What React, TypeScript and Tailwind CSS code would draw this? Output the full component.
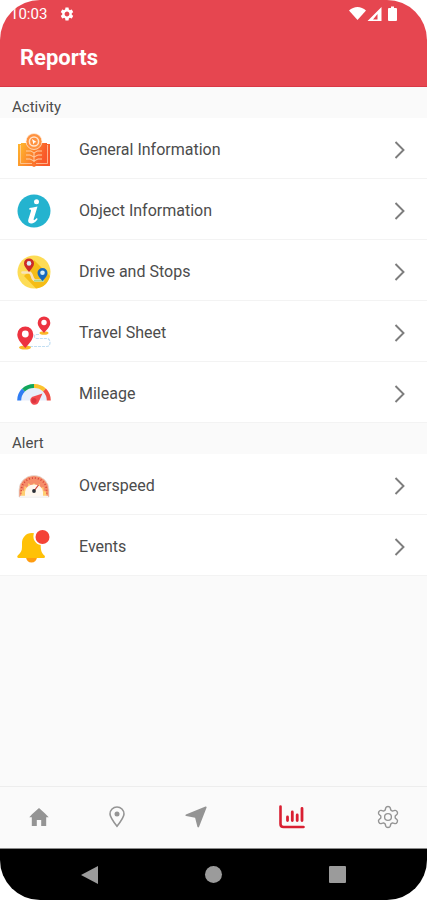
import type { ReactNode } from "react";
import { MdSettings } from "react-icons/md";

function BookIcon() {
  return (
    <svg viewBox="0 0 34 34" className="size-[34px]" aria-hidden="true">
      <defs>
        <linearGradient id="book" x1="0" x2="1" y1="0" y2="0.3">
          <stop offset="0" stopColor="#ffb52e" />
          <stop offset="1" stopColor="#f9582a" />
        </linearGradient>
      </defs>
      <path d="M1 11h3v19h12l1 2 1-2h12V11h3v22H19l-2 1-2-1H1z" fill="url(#book)" />
      <path d="M4 10h9l4 3 4-3h9v20h-9l-4 2-4-2H4z" fill="url(#book)" />
      <path d="M3.500 12v18.500H15M30.500 12v18.500H19" fill="none" stroke="#ffd9b8" strokeWidth=".7" />
      <path d="M9 18h5l3 2 3-2h5M9 22h4l4 2 4-2h4M9 26h4l4 2 4-2h4M17 20v9" fill="none" stroke="#ffcfa6" strokeWidth="1" />
      <circle cx="17" cy="8.500" r="8" fill="#ff923f" stroke="#fff0e2" strokeWidth=".7" />
      <circle cx="17" cy="8.500" r="4.600" fill="none" stroke="#ffe3cc" strokeWidth="1.500" />
      <path d="m15 6 4.500 3-2 .5-1 2z" fill="#fff" />
    </svg>
  );
}

function InfoIcon() {
  return (
    <svg viewBox="0 0 34 34" className="size-[34px]" aria-hidden="true">
      <circle cx="17" cy="17" r="16.500" fill="#24b3cf" />
      <circle cx="19.500" cy="7.800" r="2.500" fill="#fff" />
      <path d="M12.500 14c2-.3 4.500-.8 8-1.500l-3.800 12.600c-.4 1.700.7 1.600 3-1l1 .8c-2.500 3.600-4.700 4.800-6.800 4.600-2.500-.2-3.200-1.900-2.500-4.200l2.600-8.200c.3-1 .1-1.500-1.900-1.500z" fill="#fff" />
    </svg>
  );
}

function DriveIcon() {
  return (
    <svg viewBox="0 0 34 34" className="size-[34px]" aria-hidden="true">
      <circle cx="17" cy="17" r="16.500" fill="#fddc55" />
      <path d="m14 14 3-9 16 16c-1.500 7-7 12-14 12.500L7 21z" fill="#f5bd16" />
      <path d="M5.500 17.500h6.500c4 0 2 7 6 8h8" fill="none" stroke="#f8e3bd" strokeWidth="2.600" strokeLinecap="round" />
      <path d="M17 25.700h10" stroke="#aad88c" strokeWidth="1.800" />
      <path d="M12 17C9 13 7 11 7 8.400a5 5 0 0 1 10 0C17 11 15 13 12 17z" fill="#cb2b28" />
      <circle cx="12" cy="8.400" r="2.300" fill="#d5effa" />
      <path d="M25.500 26c-3-3.500-5-5.500-5-8a5 5 0 0 1 10 0c0 2.500-2 4.500-5 8z" fill="#1769bd" />
      <circle cx="25.500" cy="17.800" r="2.300" fill="#d5effa" />
    </svg>
  );
}

function TravelIcon() {
  return (
    <svg viewBox="0 0 34 34" className="size-[34px]" aria-hidden="true">
      <path d="M22 18.500h-2c-4 0-3 4 0 4h10c4 0 4 8 0 8H12" fill="none" stroke="#c1def2" strokeWidth="1.200" strokeDasharray="3 1" />
      <ellipse cx="27" cy="17" rx="4.500" ry="1.800" fill="#fbb929" />
      <ellipse cx="8" cy="31.500" rx="6" ry="2" fill="#fbb929" />
      <path d="M27 17c-4-4.500-6.300-6.800-6.300-10.200a6.300 6.300 0 0 1 12.600 0C33.300 10.200 31 12.500 27 17z" fill="#ed3340" />
      <circle cx="27" cy="6.500" r="2.700" fill="#fff" />
      <path d="M8.300 32C3 26 .3 22.700.3 18.400a8 8 0 0 1 16 0c0 4.300-2.700 7.600-8 13.600z" fill="#ed3340" />
      <circle cx="8.300" cy="18" r="3.400" fill="#fff" />
    </svg>
  );
}

function MileageIcon() {
  return (
    <svg viewBox="0 0 34 34" className="size-[34px]" aria-hidden="true">
      <path d="M4 23.500a13 13 0 0 1 26 0z" fill="#e7eefb" />
      <g fill="none" strokeWidth="4">
        <path d="M2.200 23.500A15 15 0 0 1 6.500 13" stroke="#2f7df4" />
        <path d="M6.500 13A15 15 0 0 1 17 9" stroke="#12a65c" />
        <path d="M17 9a15 15 0 0 1 10.500 4" stroke="#fcc32f" />
        <path d="M27.500 13a15 15 0 0 1 4.300 10.500" stroke="#f04b43" />
      </g>
      <path d="M25.500 16.500 22 24.300c-1 4-5.600 4.600-7.600 2-2-2.600-.9-6.200 2-6.700z" fill="#f24a50" />
      <circle cx="17" cy="23.500" r="2.500" fill="#dc343e" />
    </svg>
  );
}

function OverspeedIcon() {
  return (
    <svg viewBox="0 0 34 34" className="size-[34px]" aria-hidden="true">
      <path d="M2 28v-7a15 14.500 0 0 1 30 0v7z" fill="#f58d68" stroke="#e5ded9" strokeWidth=".8" />
      <path d="M4.500 25v-4a12.500 12 0 0 1 25 0v4" fill="none" stroke="#d9443e" strokeWidth="1.700" strokeDasharray="1 2" />
      <path d="m4 27 1-6 2 1 .5-5 3 2 1-5 3 3 2.500-3 2.500 3 3-2 1 4 3-1v4l2.500.500.500 4.500z" fill="#ffcf73" />
      <path d="M8 27v-4a9 7.500 0 0 1 18 0v4z" fill="#fff7ee" />
      <path d="m17 22 4.500-6" stroke="#d14239" strokeWidth="1.200" />
      <circle cx="17" cy="22" r="1.900" fill="#292e35" />
      <path d="M3 27.500h28" stroke="#f7f5f4" strokeWidth="1.500" />
    </svg>
  );
}

function BellIcon() {
  return (
    <svg viewBox="0 0 34 34" className="size-[34px]" aria-hidden="true">
      <path d="M9 27h11a5.500 5.500 0 0 1-11 0z" fill="#ff9c10" />
      <path d="M15 3C8.500 3 5 8 5 13v4c0 4-1.500 6-4 8.300C-.3 26.500.2 28 1.500 28h25c1.500 0 2-1.500.7-2.700C24.700 23 23.700 21 23.700 15A8.800 8.800 0 0 1 17 3.200z" fill="#ffc107" />
      <circle cx="25.500" cy="7" r="7" fill="#f44336" />
    </svg>
  );
}

function ChevronIcon() {
  return (
    <svg viewBox="0 0 12 20" className="h-5 w-3 shrink-0" aria-hidden="true">
      <path d="m1.500 2 8 8-8 8" fill="none" stroke="#7d7d7d" strokeWidth="1.900" />
    </svg>
  );
}

function StatusIcons() {
  return (
    <svg viewBox="0 0 50 16" className="h-4 w-[50px]" fill="#fff" aria-hidden="true">
      <path d="M0 4.500C5-.3 12-.3 17 4.500L8.500 14z" />
      <path fillRule="evenodd" d="M18.500 15 32.500 1v14zM24 13.500h4.500V8z" />
      <path d="M40 2h2V.5h3V2h2q1 0 1 1v11q0 1-1 1h-7q-1 0-1-1V3q0-1 1-1z" />
    </svg>
  );
}

function HomeIcon() {
  return (
    <svg viewBox="0 0 20 20" className="size-5" fill="#949494" aria-hidden="true">
      <path d="M10 1 3 7.300l-2.700 3h2.500V19h5v-6h4.400v6h5v-8.700h2.500L15.800 6.300z" />
    </svg>
  );
}

function PinIcon() {
  return (
    <svg viewBox="0 0 16 22" className="h-[22px] w-4" aria-hidden="true">
      <path d="M8 20.300C3.500 14.500 1 11.200 1 8a7 7 0 0 1 14 0c0 3.200-2.500 6.500-7 12.300z" fill="none" stroke="#949494" strokeWidth="1.600" />
      <circle cx="8" cy="8" r="2.500" fill="#949494" />
    </svg>
  );
}

function ArrowIcon() {
  return (
    <svg viewBox="0 0 22 22" className="size-[22px]" fill="#949494" aria-hidden="true">
      <path d="M20.500.5.900 8.500q-1.200 1 .3 1.500l8.900 1.800 2.300 9q.8 1.500 1.700 0L21.600 1.500Q21.700.3 20.500.5z" />
    </svg>
  );
}

function ChartIcon() {
  return (
    <svg viewBox="0 0 26 24" className="h-6 w-[26px]" fill="none" stroke="#d91f32" strokeLinecap="round" aria-hidden="true">
      <path d="M1.500 1.500v17.500q0 3 3 3h20" strokeWidth="2.600" />
      <path d="M8.500 12v3.500M13.300 7v8.500M18.200 10v5.500M23 3.500v12" strokeWidth="2.800" />
    </svg>
  );
}

function GearIcon() {
  return (
    <svg viewBox="0 0 24 24" className="size-6" fill="none" stroke="#949494" strokeWidth="1.400" strokeLinejoin="round" aria-hidden="true">
      <path d="M12 1.500q1.800 0 2.200 1.200l.7 2.500 1.500.9 2.500-.7q1.300-.3 2.200 1.300t0 2.500L19.200 11v2l1.900 1.800q.9.900 0 2.500t-2.200 1.300l-2.500-.7-1.500.9-.7 2.500q-.4 1.200-2.200 1.200t-2.200-1.200l-.7-2.500-1.500-.9-2.500.7q-1.300.3-2.200-1.300t0-2.500L4.800 13v-2L2.900 9.200Q2 8.300 2.900 6.700t2.200-1.300l2.500.7 1.500-.9.700-2.500Q10.200 1.500 12 1.500z" />
      <circle cx="12" cy="12" r="3.400" />
    </svg>
  );
}

const sections: { title: string; items: { label: string; icon: ReactNode }[] }[] = [
  {
    title: "Activity",
    items: [
      { label: "General Information", icon: <BookIcon /> },
      { label: "Object Information", icon: <InfoIcon /> },
      { label: "Drive and Stops", icon: <DriveIcon /> },
      { label: "Travel Sheet", icon: <TravelIcon /> },
      { label: "Mileage", icon: <MileageIcon /> },
    ],
  },
  {
    title: "Alert",
    items: [
      { label: "Overspeed", icon: <OverspeedIcon /> },
      { label: "Events", icon: <BellIcon /> },
    ],
  },
];

const tabs = [
  { label: "Home", icon: <HomeIcon />, width: "flex-1" },
  { label: "Places", icon: <PinIcon />, width: "flex-1" },
  { label: "Navigate", icon: <ArrowIcon />, width: "flex-1" },
  { label: "Reports", icon: <ChartIcon />, width: "w-[114px]" },
  { label: "Settings", icon: <GearIcon />, width: "flex-1" },
];

export default function App() {
  return (
    <div className="min-h-screen bg-white font-['Roboto',sans-serif]">
      <div className="flex min-h-screen flex-col overflow-hidden rounded-[40px] bg-[#fafafa]">
        <header className="border-b border-[#d93846] bg-[#e64650] text-white">
          <div className="flex h-7 items-center pr-7 pl-2.5">
            <span className="text-[15px]">10:03</span>
            <MdSettings className="ml-3 size-4" aria-hidden="true" />
            <span className="ml-auto">
              <StatusIcons />
            </span>
          </div>
          <h1 className="px-5 pt-4 pb-[14px] text-[22px] leading-7 font-bold">Reports</h1>
        </header>

        <main className="flex-1">
          {sections.map((section) => (
            <section key={section.title}>
              <h2 className="h-[31px] px-3 pt-2.5 text-[15px] leading-5 text-[#4c4c4c]">{section.title}</h2>
              <ul>
                {section.items.map((item) => (
                  <li key={item.label} className="border-b border-[#f3f3f3] bg-white">
                    <button type="button" className="flex h-[60px] w-full items-center pt-[3px] pr-[21px] pl-[17px] text-left">
                      {item.icon}
                      <span className="ml-7 flex-1 text-base text-[#4c4c4c]">{item.label}</span>
                      <ChevronIcon />
                    </button>
                  </li>
                ))}
              </ul>
            </section>
          ))}
        </main>

        <nav aria-label="Main" className="flex h-[62px] border-t border-[#ededed] pb-0.5">
          {tabs.map((tab) => (
            <button
              key={tab.label}
              type="button"
              aria-label={tab.label}
              className={`flex items-center justify-center ${tab.width}`}
            >
              {tab.icon}
            </button>
          ))}
        </nav>

        <div className="flex h-[52px] items-center justify-around border-t border-[#8a8a8a] bg-black px-7">
          <button type="button" aria-label="Back">
            <svg viewBox="0 0 18 18" className="size-[18px]" fill="#9b9b9b" aria-hidden="true">
              <path d="M17 0v18L0 9z" />
            </svg>
          </button>
          <button type="button" aria-label="Home screen" className="size-[17px] rounded-full bg-[#9b9b9b]" />
          <button type="button" aria-label="Recent apps" className="size-[17px] rounded-[1px] bg-[#9b9b9b]" />
        </div>
      </div>
    </div>
  );
}
